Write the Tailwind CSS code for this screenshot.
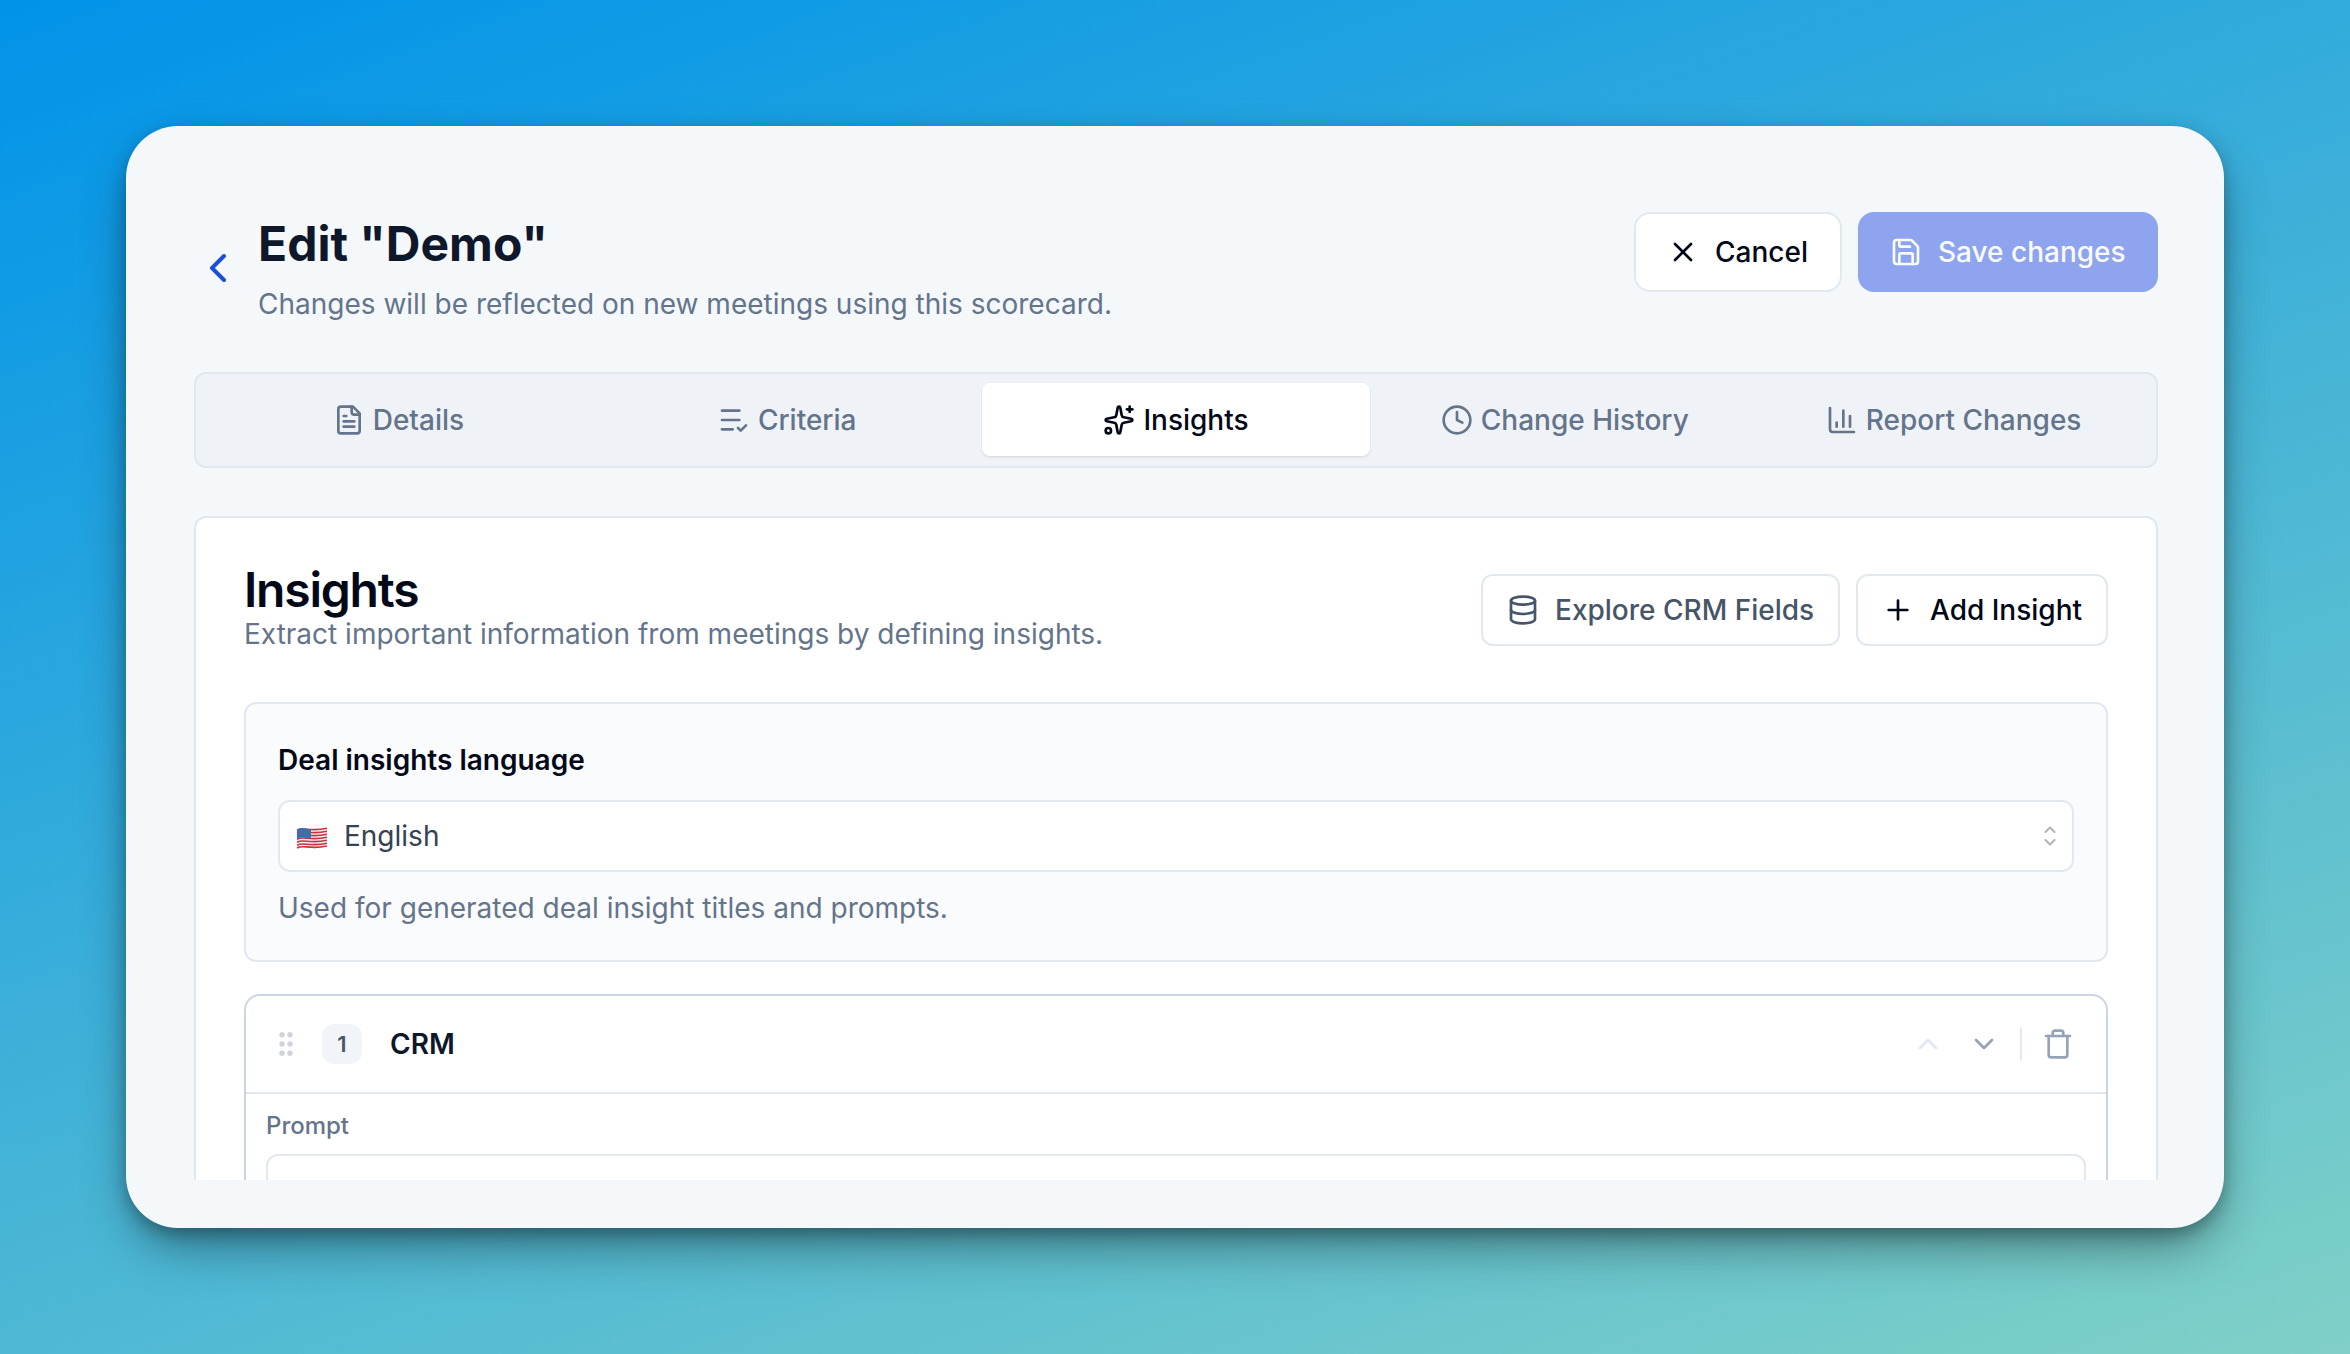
<!DOCTYPE html>
<html lang="en">
    <head>
        <meta charset="UTF-8" />
        <meta name="viewport" content="width=device-width, initial-scale=1" />
        <title>Edit Scorecard</title>
        <!-- Tailwind CSS via CDN -->
        <script src="https://cdn.jsdelivr.net/npm/@tailwindcss/browser@4"></script>
    </head>

    <body class="h-[1354px] overflow-hidden p-[126px] font-['Inter',sans-serif] text-[28px] leading-10 text-[#020817] bg-[linear-gradient(160deg,#0093E9_0%,#80D0C7_100%)]">
        <!-- Window -->
        <div class="h-[1102px] w-[2098px] rounded-[52px] bg-[#f4f8fb] px-[68px] pt-[86px] pb-12 flex flex-col shadow-[0_24px_52px_-10px_rgba(0,0,0,0.45),0_6px_16px_rgba(0,0,0,0.25)]">

            <!-- Page Header -->
            <header class="flex h-40 w-[1964px] shrink-0 items-start justify-between">
                <div class="flex">
                    <a href="#" class="mt-8 w-16 text-[#1d4ed8]">
                        <svg class="size-12" viewBox="0 0 24 24" fill="none" stroke="currentColor" stroke-width="2" stroke-linecap="round" stroke-linejoin="round"><path d="m15 18-6-6 6-6"/></svg>
                    </a>
                    <div>
                        <h1 class="text-[48px] leading-[64px] font-bold text-slate-900">Edit "Demo"</h1>
                        <p class="mt-2 text-[#64748b]">Changes will be reflected on new meetings using this scorecard.</p>
                    </div>
                </div>
                <div class="flex gap-4 font-medium">
                    <button class="flex h-20 w-[208px] items-center gap-4 rounded-2xl border-2 border-slate-200 bg-white pl-[31px]">
                        <svg class="size-8" viewBox="0 0 24 24" fill="none" stroke="currentColor" stroke-width="2" stroke-linecap="round" stroke-linejoin="round"><path d="M18 6 6 18"/><path d="m6 6 12 12"/></svg>
                        Cancel
                    </button>
                    <button class="flex h-20 w-[300px] items-center gap-4 rounded-2xl bg-[#8fa4ee] pl-8 text-slate-50">
                        <svg class="size-8" viewBox="0 0 24 24" fill="none" stroke="currentColor" stroke-width="2" stroke-linecap="round" stroke-linejoin="round"><path d="M15.2 3a2 2 0 0 1 1.4.6l3.8 3.8a2 2 0 0 1 .6 1.4V19a2 2 0 0 1-2 2H5a2 2 0 0 1-2-2V5a2 2 0 0 1 2-2z"/><path d="M17 21v-7a1 1 0 0 0-1-1H8a1 1 0 0 0-1 1v7"/><path d="M7 3v4a1 1 0 0 0 1 1h7"/></svg>
                        Save changes
                    </button>
                </div>
            </header>

            <!-- Tabs -->
            <nav class="grid h-24 w-[1964px] shrink-0 grid-cols-5 rounded-xl border-2 border-slate-200 bg-[#eff3f8] p-2 font-medium text-[#64748b]">
                <a href="#" class="flex items-center justify-center gap-2">
                    <svg class="size-8" viewBox="0 0 24 24" fill="none" stroke="currentColor" stroke-width="2" stroke-linecap="round" stroke-linejoin="round"><path d="M15 2H6a2 2 0 0 0-2 2v16a2 2 0 0 0 2 2h12a2 2 0 0 0 2-2V7Z"/><path d="M14 2v4a2 2 0 0 0 2 2h4"/><path d="M10 9H8"/><path d="M16 13H8"/><path d="M16 17H8"/></svg>
                    Details
                </a>
                <a href="#" class="flex items-center justify-center gap-2">
                    <svg class="size-8" viewBox="0 0 24 24" fill="none" stroke="currentColor" stroke-width="2" stroke-linecap="round" stroke-linejoin="round"><path d="M16 5H3"/><path d="M16 12H3"/><path d="M11 19H3"/><path d="m15 18 2 2 4-4"/></svg>
                    Criteria
                </a>
                <a href="#" class="mt-px mb-0.5 flex items-center justify-center gap-2 rounded-lg bg-white text-[#020817] shadow-sm">
                    <svg class="size-8" viewBox="0 0 24 24" fill="none" stroke="currentColor" stroke-width="2" stroke-linecap="round" stroke-linejoin="round"><path d="M11.017 2.814a1 1 0 0 1 1.966 0l1.051 5.558a2 2 0 0 0 1.594 1.594l5.558 1.051a1 1 0 0 1 0 1.966l-5.558 1.051a2 2 0 0 0-1.594 1.594l-1.051 5.558a1 1 0 0 1-1.966 0l-1.051-5.558a2 2 0 0 0-1.594-1.594l-5.558-1.051a1 1 0 0 1 0-1.966l5.558-1.051a2 2 0 0 0 1.594-1.594z"/><path d="M20 2v4"/><path d="M22 4h-4"/><circle cx="4" cy="20" r="2"/></svg>
                    Insights
                </a>
                <a href="#" class="flex items-center justify-center gap-2">
                    <svg class="size-8" viewBox="0 0 24 24" fill="none" stroke="currentColor" stroke-width="2" stroke-linecap="round" stroke-linejoin="round"><circle cx="12" cy="12" r="10"/><path d="M12 6v6l4 2"/></svg>
                    Change History
                </a>
                <a href="#" class="flex items-center justify-center gap-2">
                    <svg class="size-8" viewBox="0 0 24 24" fill="none" stroke="currentColor" stroke-width="2" stroke-linecap="round" stroke-linejoin="round"><path d="M3 3v16a2 2 0 0 0 2 2h16"/><path d="M18 17V9"/><path d="M13 17V5"/><path d="M8 17v-3"/></svg>
                    Report Changes
                </a>
            </nav>

            <!-- Insights Panel, cut off at the bottom of the scroll area -->
            <main class="mt-12 min-h-0 w-[1964px] flex-1 overflow-hidden rounded-t-xl border-2 border-b-0 border-slate-200 bg-white px-12 pt-12">
                <div class="flex h-[136px] justify-between">
                    <div>
                        <h2 class="text-[48px] leading-[48px] font-semibold tracking-tight">Insights</h2>
                        <p class="text-[#64748b]">Extract important information from meetings by defining insights.</p>
                    </div>
                    <div class="flex gap-4 pt-2 font-medium">
                        <button class="flex h-[72px] w-[359px] items-center gap-4 rounded-xl border-2 border-slate-200 pl-6 text-[#475569]">
                            <svg class="size-8" viewBox="0 0 24 24" fill="none" stroke="currentColor" stroke-width="2" stroke-linecap="round" stroke-linejoin="round"><ellipse cx="12" cy="5" rx="9" ry="3"/><path d="M3 5v14a9 3 0 0 0 18 0V5"/><path d="M3 12a9 3 0 0 0 18 0"/></svg>
                            Explore CRM Fields
                        </button>
                        <button class="flex h-[72px] w-[252px] items-center gap-4 rounded-xl border-2 border-slate-200 pl-6">
                            <svg class="size-8" viewBox="0 0 24 24" fill="none" stroke="currentColor" stroke-width="2" stroke-linecap="round" stroke-linejoin="round"><path d="M5 12h14"/><path d="M12 5v14"/></svg>
                            Add Insight
                        </button>
                    </div>
                </div>

                <!-- Language Select -->
                <section class="h-[260px] rounded-xl border-2 border-slate-200 bg-[#fafbfd] px-8 pt-9">
                    <label class="block font-semibold">Deal insights language</label>
                    <div class="mt-5 flex h-[72px] items-center rounded-xl border-2 border-slate-200 bg-white pr-3.5 pl-4 text-gray-700">
                        <svg class="mt-1 h-6 w-8" viewBox="0 0 32 24">
                            <path d="M1 4c6-4 12 2 30-2v18c-18 4-24-2-30 2z" fill="#f4f1f2"/>
                            <path d="M1 4.300c6-4 12 2 30-2M1 7.300c6-4 12 2 30-2M1 10.300c6-4 12 2 30-2M1 13.300c6-4 12 2 30-2M1 16.300c6-4 12 2 30-2M1 19.300c6-4 12 2 30-2M1 22c6-4 12 2 30-2" fill="none" stroke="#c43543" stroke-width="1.600"/>
                            <path d="M1 3.500c5-3 9-.5 14-.3v9.500c-5-.2-9-2.500-14 .3z" fill="#3f6fa8"/>
                        </svg>
                        <span class="ml-4">English</span>
                        <svg class="ml-auto h-6 w-4 text-[#aeb3b9]" viewBox="0 0 16 24" fill="none" stroke="currentColor" stroke-width="2" stroke-linecap="round" stroke-linejoin="round"><path d="m3.500 8 4.500-4.500L12.500 8"/><path d="m3.500 16 4.500 4.500 4.500-4.500"/></svg>
                    </div>
                    <p class="mt-4 text-[#64748b]">Used for generated deal insight titles and prompts.</p>
                </section>

                <!-- Insight Item -->
                <section class="mt-8 h-[400px] rounded-2xl border-2 border-slate-300">
                    <div class="flex h-[98px] items-center border-b-2 border-slate-200 pr-8 pl-6">
                        <svg class="size-8" viewBox="0 0 32 32" fill="#cfd3db"><circle cx="12" cy="6.700" r="2.700"/><circle cx="20" cy="6.700" r="2.700"/><circle cx="12" cy="16" r="2.700"/><circle cx="20" cy="16" r="2.700"/><circle cx="12" cy="25.300" r="2.700"/><circle cx="20" cy="25.300" r="2.700"/></svg>
                        <span class="ml-5 flex size-10 items-center justify-center rounded-xl bg-slate-100 text-[22px] font-semibold text-[#475569]">1</span>
                        <h3 class="ml-7 font-semibold text-slate-900">CRM</h3>
                        <div class="ml-auto flex items-center text-[#94a3b8]">
                            <svg class="size-8 text-slate-200" viewBox="0 0 24 24" fill="none" stroke="currentColor" stroke-width="2" stroke-linecap="round" stroke-linejoin="round"><path d="m18 15-6-6-6 6"/></svg>
                            <svg class="ml-6 size-8" viewBox="0 0 24 24" fill="none" stroke="currentColor" stroke-width="2" stroke-linecap="round" stroke-linejoin="round"><path d="m6 9 6 6 6-6"/></svg>
                            <span class="ml-5 h-8 w-0.5 bg-slate-200"></span>
                            <svg class="ml-5 size-8" viewBox="0 0 24 24" fill="none" stroke="currentColor" stroke-width="2" stroke-linecap="round" stroke-linejoin="round"><path d="M3 6h18"/><path d="M19 6v14a2 2 0 0 1-2 2H7a2 2 0 0 1-2-2V6"/><path d="M8 6V4a2 2 0 0 1 2-2h4a2 2 0 0 1 2 2v2"/></svg>
                        </div>
                    </div>
                    <div class="px-5 pt-4">
                        <label class="block text-2xl leading-8 font-medium text-[#64748b]">Prompt</label>
                        <div class="mt-3 h-40 rounded-xl border-2 border-slate-200"></div>
                    </div>
                </section>
            </main>
        </div>
    </body>
</html>
